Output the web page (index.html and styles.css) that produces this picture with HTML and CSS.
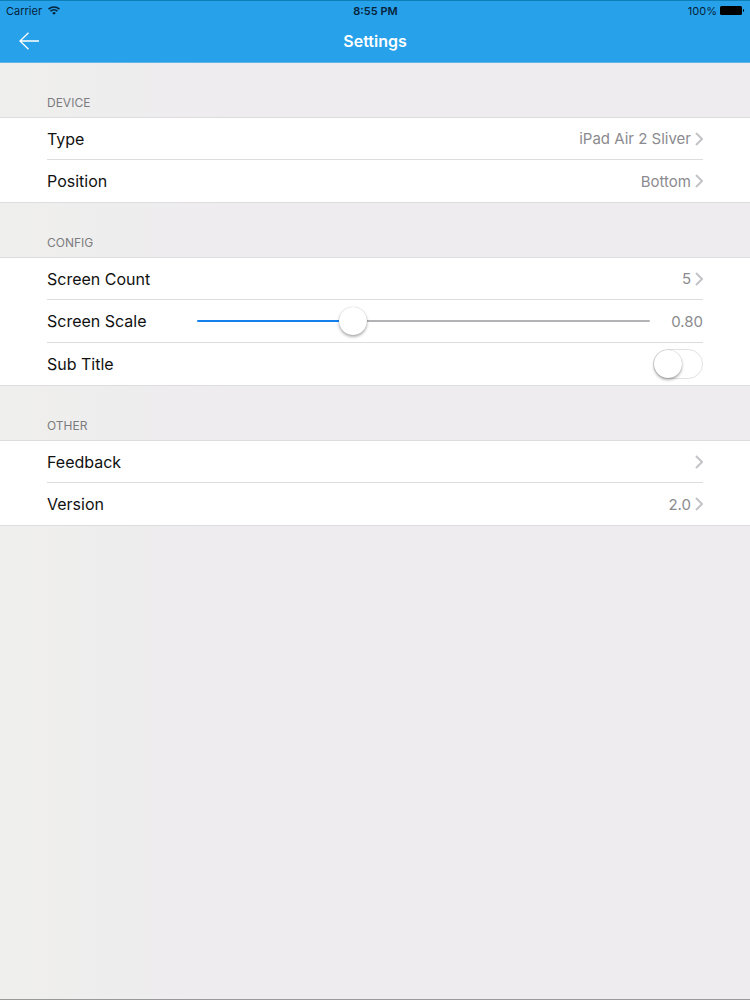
FILE: index.html
```html
<!DOCTYPE html>
<html lang="en">
<head>
    <meta charset="UTF-8">
    <meta name="viewport" content="width=device-width, initial-scale=1.0">
    <title>Settings</title>
    <link rel="stylesheet" href="styles.css">
</head>
<body>
    <header class="top">
        <div class="status">
            <div class="carrier">
                <span>Carrier</span>
                <svg width="12" height="9" viewBox="0 0 12 9" fill="none" stroke="currentColor" stroke-width="1.6">
                    <path d="M0.6 3.2a7.8 7.8 0 0 1 10.8 0"/>
                    <path d="M2.5 5.3a5 5 0 0 1 7 0"/>
                    <path d="M6 8.8L4.1 6.9a2.7 2.7 0 0 1 3.8 0z" fill="currentColor" stroke="none"/>
                </svg>
            </div>
            <div class="time">8:55 PM</div>
            <div class="battery">
                <span>100%</span>
                <svg width="25" height="9" viewBox="0 0 25 9" fill="currentColor">
                    <rect x="0" y="0" width="22" height="9" rx="1.5"/>
                    <path d="M23 3a1.6 1.6 0 0 1 0 3z"/>
                </svg>
            </div>
        </div>
        <nav class="navbar">
            <button type="button" class="back" aria-label="Back">
                <svg width="20" height="18" viewBox="0 0 20 18" fill="none" stroke="currentColor" stroke-width="1.3">
                    <path d="M9.5 0.7L1 9l8.5 8.3M1 9h19"/>
                </svg>
            </button>
            <h1>Settings</h1>
        </nav>
    </header>

    <main>
        <h2>DEVICE</h2>
        <div class="list">
            <a class="row" href="#type">
                <span class="name">Type</span>
                <span class="value">iPad Air 2 Sliver</span>
                <svg class="chevron" viewBox="0 0 8 14"><path d="M1 1l6 6-6 6"/></svg>
            </a>
            <a class="row" href="#position">
                <span class="name">Position</span>
                <span class="value">Bottom</span>
                <svg class="chevron" viewBox="0 0 8 14"><path d="M1 1l6 6-6 6"/></svg>
            </a>
        </div>

        <h2>CONFIG</h2>
        <div class="list">
            <a class="row" href="#count">
                <span class="name">Screen Count</span>
                <span class="value">5</span>
                <svg class="chevron" viewBox="0 0 8 14"><path d="M1 1l6 6-6 6"/></svg>
            </a>
            <div class="row">
                <label class="name scale-name" for="scale">Screen Scale</label>
                <input type="range" id="scale" class="slider" min="0.7" max="1" step="0.01" value="0.8">
                <output class="value scale-value" id="scale-value" for="scale">0.80</output>
            </div>
            <div class="row">
                <label class="name" for="subtitle">Sub Title</label>
                <input type="checkbox" id="subtitle" class="switch">
            </div>
        </div>

        <h2>OTHER</h2>
        <div class="list">
            <a class="row" href="#feedback">
                <span class="name">Feedback</span>
                <svg class="chevron" viewBox="0 0 8 14"><path d="M1 1l6 6-6 6"/></svg>
            </a>
            <a class="row" href="#version">
                <span class="name">Version</span>
                <span class="value">2.0</span>
                <svg class="chevron" viewBox="0 0 8 14"><path d="M1 1l6 6-6 6"/></svg>
            </a>
        </div>
    </main>

    <script>
        // Keep the blue part of the track and the number in step with the thumb
        const scale = document.getElementById('scale');
        const scaleValue = document.getElementById('scale-value');

        function updateScale() {
            const part = (scale.value - scale.min) / (scale.max - scale.min);
            scale.style.setProperty('--fill', part * 100 + '%');
            scaleValue.textContent = Number(scale.value).toFixed(2);
        }

        scale.addEventListener('input', updateScale);
        updateScale();
    </script>
</body>
</html>
```
FILE: styles.css
```css
* {
    box-sizing: border-box;
}
body {
    margin: 0;
    min-height: 100vh;
    font-family: Inter, "Liberation Sans", sans-serif;
    font-size: 16px;
    color: #111;
    background: linear-gradient(to right, #efefed, #eeecef 30%);
    border-bottom: 1px solid #999;
}
.top {
    background-color: #26a1ea;
    border-top: 1px solid #0c7fb8;
    border-bottom: 1px solid #62b4e4;
}
.status {
    display: grid;
    grid-template-columns: 1fr auto 1fr;
    align-items: center;
    height: 19px;
    padding: 0 5px 0 6px;
    font-size: 11px;
    color: #06233a;
}
.carrier, .battery {
    display: flex;
    align-items: center;
    gap: 6px;
}
.battery {
    justify-content: flex-end;
    gap: 3px;
}
.battery svg {
    color: #000;
}
.time {
    font-weight: 600;
}
.navbar {
    display: grid;
    grid-template-columns: 1fr auto 1fr;
    align-items: center;
    height: 42px;
    padding: 0 19px;
    color: #fff;
}
.back {
    display: flex;
    justify-self: start;
    padding: 0;
    border: none;
    background: none;
    color: inherit;
    cursor: pointer;
}
h1 {
    margin: 0;
    font-size: 16px;
    font-weight: 600;
}
h2 {
    margin: 0;
    padding: 32px 47px 6px;
    font-size: 12px;
    font-weight: 400;
    line-height: 16px;
    color: #7c7c7e;
}
.list {
    padding: 0 47px;
    background-color: #fff;
    border-top: 1px solid #dddddf;
    border-bottom: 1px solid #dddddf;
}
.row {
    display: flex;
    align-items: center;
    height: 43px;
    color: inherit;
    text-decoration: none;
    border-bottom: 1px solid #dddddf;
}
.row:first-child {
    height: 42px;
}
.row:last-child {
    height: 42px;
    border-bottom: none;
}
.name {
    flex: 1;
}
.value {
    font-size: 15px;
    color: #8b8b8f;
}
.chevron {
    width: 8px;
    height: 14px;
    margin-left: 4px;
    fill: none;
    stroke: #c4c4c8;
    stroke-width: 2;
}
.scale-name {
    flex: none;
    width: 150px;
}
.scale-value {
    width: 53px;
    text-align: right;
}
.slider {
    flex: 1;
    min-width: 0;
    height: 28px;
    margin: 0;
    appearance: none;
    background: none;
}
.slider::-webkit-slider-runnable-track {
    height: 2px;
    border-radius: 1px;
    background: linear-gradient(to right, #1480ee var(--fill), #b3b3b5 var(--fill));
}
.slider::-webkit-slider-thumb {
    appearance: none;
    width: 28px;
    height: 28px;
    margin-top: -13px;
    border-radius: 50%;
    background-color: #fff;
    box-shadow: 0 0 1px rgba(0, 0, 0, 0.3), 0 2px 3px rgba(0, 0, 0, 0.3);
}
.switch {
    display: flex;
    appearance: none;
    width: 50px;
    height: 30px;
    margin: 0;
    border: 1px solid #e2e0e5;
    border-radius: 15px;
    background-color: #fff;
    cursor: pointer;
}
.switch::before {
    content: "";
    width: 28px;
    height: 28px;
    border-radius: 50%;
    background-color: #fff;
    box-shadow: 0 0 1px rgba(0, 0, 0, 0.3), 0 2px 3px rgba(0, 0, 0, 0.3);
}
.switch:checked {
    justify-content: flex-end;
    background-color: #4cd964;
}
```
